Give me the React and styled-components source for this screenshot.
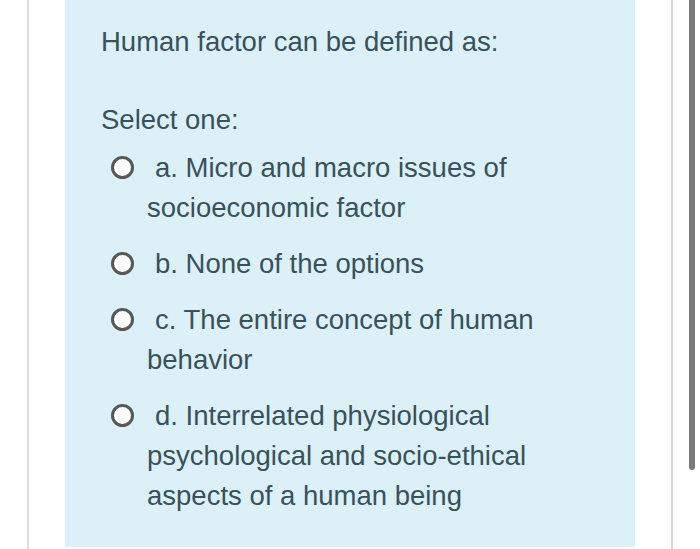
import styled, { createGlobalStyle } from 'styled-components';

const Global = createGlobalStyle`
  html, body {
    margin: 0;
    padding: 0;
    background: #fff;
  }
  body {
    font-family: "Liberation Sans", Arial, sans-serif;
  }
`;

const Page = styled.div`
  position: relative;
  width: 700px;
  height: 549px;
  overflow: hidden;
  background: #fff;
`;

const Card = styled.div`
  margin-left: 27px;
  width: 570px;
  height: 549px;
  padding: 0 36px;
  border-left: 2px solid #dedede;
  border-right: 2px solid #d8d8d8;
`;

const Panel = styled.div`
  height: 547px;
  box-sizing: border-box;
  padding: 22px 36px 0;
  background: #dcf0f7;
  color: #37525c;
  font-size: 27.5px;
  line-height: 40px;
`;

const Question = styled.div`
  margin-bottom: 38px;
`;

const Prompt = styled.div`
  margin-bottom: 8px;
`;

const Option = styled.div`
  padding-left: 46px;
  text-indent: -36px;
  margin-bottom: 16px;
`;

const Radio = styled.span`
  display: inline-block;
  box-sizing: border-box;
  width: 23px;
  height: 23px;
  margin-right: 21px;
  border: 3px solid #585858;
  border-radius: 50%;
  background: #fff;
  vertical-align: -2px;
  text-indent: 0;
`;

const Scrollbar = styled.div`
  position: absolute;
  top: 0;
  left: 689px;
  width: 6px;
  height: 470px;
  background: #7a7a7a;
  border-radius: 0 0 3px 3px;
`;

const options = [
  'a. Micro and macro issues of socioeconomic factor',
  'b. None of the options',
  'c. The entire concept of human behavior',
  'd. Interrelated physiological psychological and socio-ethical aspects of a human being',
];

export default function App() {
  return (
    <Page>
      <Global />
      <Card>
        <Panel>
          <Question>Human factor can be defined as:</Question>
          <Prompt>Select one:</Prompt>
          {options.map((o) => (
            <Option key={o}>
              <Radio />
              {o}
            </Option>
          ))}
        </Panel>
      </Card>
      <Scrollbar />
    </Page>
  );
}
